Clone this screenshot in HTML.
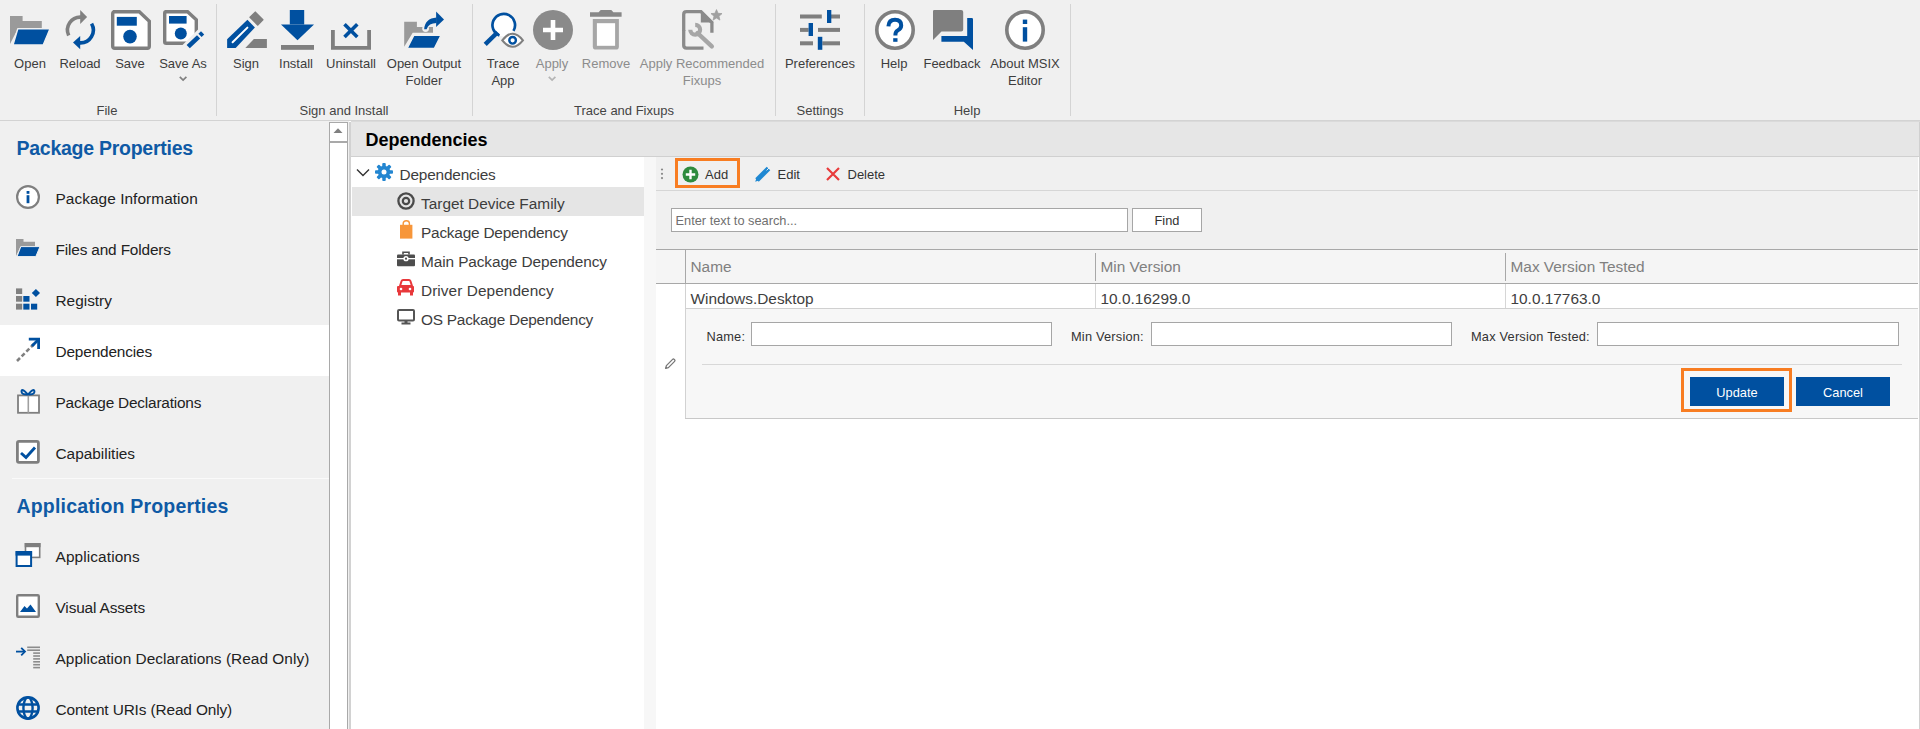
<!DOCTYPE html>
<html><head><meta charset="utf-8">
<style>
*{margin:0;padding:0;box-sizing:border-box}
html,body{width:1920px;height:729px;overflow:hidden;background:#fff;font-family:"Liberation Sans",sans-serif;color:#222}
.a{position:absolute}
.t{position:absolute;white-space:nowrap}
svg{overflow:visible}
</style></head><body>
<div class="a" style="left:0px;top:0px;width:1920px;height:120px;background:#f0f0f0"></div>
<div class="a" style="left:0px;top:120px;width:1920px;height:1px;background:#d3d3d3"></div>
<div class="a" style="left:216px;top:4px;width:1px;height:112px;background:#d4d4d4"></div>
<div class="a" style="left:472px;top:4px;width:1px;height:112px;background:#d4d4d4"></div>
<div class="a" style="left:775px;top:4px;width:1px;height:112px;background:#d4d4d4"></div>
<div class="a" style="left:864px;top:4px;width:1px;height:112px;background:#d4d4d4"></div>
<div class="a" style="left:1070px;top:4px;width:1px;height:112px;background:#d4d4d4"></div>
<div class="t" style="left:-270px;width:600px;text-align:center;top:57.23px;font-size:13px;line-height:14.52px;color:#3d3d3d;font-weight:normal;">Open</div>
<div class="t" style="left:-220px;width:600px;text-align:center;top:57.23px;font-size:13px;line-height:14.52px;color:#3d3d3d;font-weight:normal;">Reload</div>
<div class="t" style="left:-170px;width:600px;text-align:center;top:57.23px;font-size:13px;line-height:14.52px;color:#3d3d3d;font-weight:normal;">Save</div>
<div class="t" style="left:-117px;width:600px;text-align:center;top:57.23px;font-size:13px;line-height:14.52px;color:#3d3d3d;font-weight:normal;">Save As</div>
<div class="t" style="left:-54px;width:600px;text-align:center;top:57.23px;font-size:13px;line-height:14.52px;color:#3d3d3d;font-weight:normal;">Sign</div>
<div class="t" style="left:-4px;width:600px;text-align:center;top:57.23px;font-size:13px;line-height:14.52px;color:#3d3d3d;font-weight:normal;">Install</div>
<div class="t" style="left:51px;width:600px;text-align:center;top:57.23px;font-size:13px;line-height:14.52px;color:#3d3d3d;font-weight:normal;">Uninstall</div>
<div class="t" style="left:124px;width:600px;text-align:center;top:57.23px;font-size:13px;line-height:14.52px;color:#3d3d3d;font-weight:normal;">Open Output</div>
<div class="t" style="left:124px;width:600px;text-align:center;top:74.23px;font-size:13px;line-height:14.52px;color:#3d3d3d;font-weight:normal;">Folder</div>
<div class="t" style="left:203px;width:600px;text-align:center;top:57.23px;font-size:13px;line-height:14.52px;color:#3d3d3d;font-weight:normal;">Trace</div>
<div class="t" style="left:203px;width:600px;text-align:center;top:74.23px;font-size:13px;line-height:14.52px;color:#3d3d3d;font-weight:normal;">App</div>
<div class="t" style="left:252px;width:600px;text-align:center;top:57.23px;font-size:13px;line-height:14.52px;color:#8c8c8c;font-weight:normal;">Apply</div>
<div class="t" style="left:306px;width:600px;text-align:center;top:57.23px;font-size:13px;line-height:14.52px;color:#8c8c8c;font-weight:normal;">Remove</div>
<div class="t" style="left:402px;width:600px;text-align:center;top:57.23px;font-size:13px;line-height:14.52px;color:#8c8c8c;font-weight:normal;">Apply Recommended</div>
<div class="t" style="left:402px;width:600px;text-align:center;top:74.23px;font-size:13px;line-height:14.52px;color:#8c8c8c;font-weight:normal;">Fixups</div>
<div class="t" style="left:520px;width:600px;text-align:center;top:57.23px;font-size:13px;line-height:14.52px;color:#3d3d3d;font-weight:normal;">Preferences</div>
<div class="t" style="left:594px;width:600px;text-align:center;top:57.23px;font-size:13px;line-height:14.52px;color:#3d3d3d;font-weight:normal;">Help</div>
<div class="t" style="left:652px;width:600px;text-align:center;top:57.23px;font-size:13px;line-height:14.52px;color:#3d3d3d;font-weight:normal;">Feedback</div>
<div class="t" style="left:725px;width:600px;text-align:center;top:57.23px;font-size:13px;line-height:14.52px;color:#3d3d3d;font-weight:normal;">About MSIX</div>
<div class="t" style="left:725px;width:600px;text-align:center;top:74.23px;font-size:13px;line-height:14.52px;color:#3d3d3d;font-weight:normal;">Editor</div>
<div class="t" style="left:-193px;width:600px;text-align:center;top:103.73px;font-size:13px;line-height:14.52px;color:#444;font-weight:normal;">File</div>
<div class="t" style="left:44px;width:600px;text-align:center;top:103.73px;font-size:13px;line-height:14.52px;color:#444;font-weight:normal;">Sign and Install</div>
<div class="t" style="left:324px;width:600px;text-align:center;top:103.73px;font-size:13px;line-height:14.52px;color:#444;font-weight:normal;">Trace and Fixups</div>
<div class="t" style="left:520px;width:600px;text-align:center;top:103.73px;font-size:13px;line-height:14.52px;color:#444;font-weight:normal;">Settings</div>
<div class="t" style="left:667px;width:600px;text-align:center;top:103.73px;font-size:13px;line-height:14.52px;color:#444;font-weight:normal;">Help</div>
<svg class="a" style="left:179px;top:76px" width="9" height="6" viewBox="0 0 9 6"><path d="M0.8,0.8 L4.1,4.1 L7.4,0.8" fill="none" stroke="#808080" stroke-width="1.7"/></svg>
<svg class="a" style="left:548px;top:76px" width="9" height="6" viewBox="0 0 9 6"><path d="M0.8,0.8 L4.1,4.1 L7.4,0.8" fill="none" stroke="#b4b4b4" stroke-width="1.7"/></svg>
<svg class="a" style="left:10px;top:10px" width="40" height="40" viewBox="0 0 40 40"><path d="M0,6 H12.6 V11 H31.8 V18.8 H7.8 L0,34 Z" fill="#9a9a9a"/><path d="M7.8,18.8 H40 L33.2,35 H3 Z" fill="#0050a0" stroke="#f0f0f0" stroke-width="1.4" stroke-linejoin="round"/></svg>
<svg class="a" style="left:60px;top:10px" width="40" height="40" viewBox="0 0 40 40"><path d="M8.7,25.45 A12.9,12.9 0 0 1 21,7.1" fill="none" stroke="#808080" stroke-width="3.6"/><path d="M20.2,0.1 L27.1,7 L20.2,13.9 Z" fill="#808080"/><path d="M31.57,13.55 A12.9,12.9 0 0 1 19.8,32.9" fill="none" stroke="#0050a0" stroke-width="3.6"/><path d="M20.2,25.9 L13,32.5 L20.2,39.2 Z" fill="#0050a0"/></svg>
<svg class="a" style="left:111px;top:10px" width="40" height="40" viewBox="0 0 40 40"><path d="M2,1.7 H28.3 L38.3,11.2 V36.3 Q38.3,38.3 36.3,38.3 H3.7 Q1.7,38.3 1.7,36.3 V3.7 Q1.7,1.7 3.7,1.7 Z" fill="#fff" stroke="#7f7f7f" stroke-width="3.4"/><rect x="5.8" y="6.9" width="20" height="8.8" fill="#0050a0"/><circle cx="19" cy="26.6" r="6.8" fill="#0050a0"/></svg>
<svg class="a" style="left:163px;top:10px" width="42" height="42" viewBox="0 0 42 42"><path d="M1.7,1.7 H24.6 L33.3,9.8 V29 L26,33.2 H3.2 Q1.7,33.2 1.7,31.7 V3.2 Q1.7,1.7 3.2,1.7 Z" fill="#fff" stroke="#7f7f7f" stroke-width="3.4"/><rect x="6" y="6" width="17.6" height="7.6" fill="#0050a0"/><circle cx="17.8" cy="23.6" r="6" fill="#0050a0"/><path d="M19,42 L41,20" stroke="#f0f0f0" stroke-width="9"/><path d="M25.2,36.6 L35.6,26.8" stroke="#0050a0" stroke-width="4.6"/><path d="M37,25.3 L39.6,22.8" stroke="#0050a0" stroke-width="4.6"/></svg>
<svg class="a" style="left:226px;top:10px" width="42" height="40" viewBox="0 0 42 40"><path d="M1.1,37.9 V29.3 L21.4,9.7 L28.9,17.6 L9.7,37.9 Z" fill="#0050a0"/><path d="M6.6,32.2 L21.4,17.6" stroke="#fff" stroke-width="2" stroke-linecap="round"/><path d="M24.1,7.3 L29.3,2.2 L36.8,9.7 L31.7,14.9 Z" fill="#7f7f7f" stroke="#7f7f7f" stroke-width="1.6" stroke-linejoin="round"/><path d="M19.3,37.9 L27.9,29 H40.9 V37.9 Z" fill="#7f7f7f"/></svg>
<svg class="a" style="left:281px;top:10px" width="34" height="40" viewBox="0 0 34 40"><rect x="8.8" y="0" width="14.4" height="14.5" fill="#0050a0"/><path d="M0,14.5 H33 L16.5,30.3 Z" fill="#0050a0"/><rect x="0" y="35" width="33" height="4.8" fill="#7f7f7f"/></svg>
<svg class="a" style="left:331px;top:22px" width="40" height="28" viewBox="0 0 40 28"><path d="M1.9,8 V25.8 H38.1 V8" fill="none" stroke="#7f7f7f" stroke-width="3.8"/><path d="M13.5,2.3 L26.3,15 M26.3,2.3 L13.5,15" stroke="#0050a0" stroke-width="3.6"/></svg>
<svg class="a" style="left:403px;top:10px" width="42" height="40" viewBox="0 0 42 40"><path d="M1.2,11.8 H13.9 V17 H30 V22.8 H9.7 L1.2,36.8 Z" fill="#9a9a9a"/><path d="M10.8,25.2 H38.2 L31.4,38.6 H3.9 Z" fill="#0050a0" stroke="#f0f0f0" stroke-width="1.6" stroke-linejoin="round"/><circle cx="22.6" cy="18.6" r="3.4" fill="#f0f0f0"/><path d="M21.2,19.2 Q21.8,8.6 33.6,7.6 V13 Q25.6,13 23.6,19.2 Z" fill="#0050a0"/><path d="M33.1,1.5 L41,9.4 L33.1,17 Z" fill="#0050a0"/></svg>
<svg class="a" style="left:483px;top:10px" width="42" height="40" viewBox="0 0 42 40"><circle cx="20.7" cy="15.2" r="11.3" fill="#fff"/><path d="M16.5,25.6 A11.3,11.3 0 1 1 30.49,20.85" fill="none" stroke="#0050a0" stroke-width="2.7"/><path d="M2.2,34.4 L14.6,22.2" stroke="#0050a0" stroke-width="4.4"/><path d="M19.3,30.3 Q29.6,17.3 39.9,30.3 Q29.6,43.3 19.3,30.3 Z" fill="#fff" stroke="#7f7f7f" stroke-width="2.1"/><circle cx="29.6" cy="30.3" r="3.3" fill="none" stroke="#0050a0" stroke-width="2.4"/></svg>
<svg class="a" style="left:533px;top:10px" width="40" height="40" viewBox="0 0 40 40"><circle cx="20" cy="20" r="20" fill="#8a8a8a"/><path d="M20,10 V30 M10,20 H30" stroke="#fff" stroke-width="4.6"/></svg>
<svg class="a" style="left:590px;top:10px" width="32" height="40" viewBox="0 0 32 40"><path d="M0,2.2 H8.6 L10.7,0.1 H21.3 L23.4,2.2 H31.6 V6.7 H0 Z" fill="#888"/><path d="M2.8,9.1 H28.9 V36.4 Q28.9,39.6 25.7,39.6 H6 Q2.8,39.6 2.8,36.4 Z" fill="#a6a6a6"/><rect x="6.9" y="13.2" width="18.2" height="22.6" fill="#fff"/></svg>
<svg class="a" style="left:682px;top:10px" width="42" height="40" viewBox="0 0 42 40"><path d="M1.7,21 V4.5 Q1.7,1.7 4.5,1.7 H19 L29.9,12.5 V22.7" fill="none" stroke="#8a8a8a" stroke-width="3.3"/><path d="M1.7,20 V35.3 Q1.7,38.1 4.5,38.1 H21.5" fill="none" stroke="#8a8a8a" stroke-width="3.3"/><path d="M18.8,0.5 L31.5,12.5 H18.8 Z" fill="#8a8a8a"/><path d="M15.5,23 L29.8,36.4" stroke="#a6a6a6" stroke-width="4.4" stroke-linecap="round"/><path d="M13.2,14.8 A4.9,4.9 0 1 1 8.3,19.7" fill="none" stroke="#a6a6a6" stroke-width="4.2"/><path d="M34.50,-0.40 L36.03,3.30 L40.02,3.61 L36.97,6.20 L37.91,10.09 L34.50,8.00 L31.09,10.09 L32.03,6.20 L28.98,3.61 L32.97,3.30 Z" fill="#a0a0a0" stroke="#a0a0a0" stroke-width="0.8" stroke-linejoin="round"/></svg>
<svg class="a" style="left:800px;top:10px" width="40" height="40" viewBox="0 0 40 40"><rect x="0" y="4.5" width="21.8" height="4" fill="#7f7f7f"/><rect x="31" y="4.5" width="9" height="4" fill="#7f7f7f"/><rect x="27" y="0" width="4.3" height="13" fill="#0050a0"/><rect x="0" y="17.9" width="8.6" height="4" fill="#7f7f7f"/><rect x="18" y="17.9" width="22" height="4" fill="#7f7f7f"/><rect x="8.6" y="13" width="4.4" height="13" fill="#0050a0"/><rect x="0" y="31.3" width="13" height="4" fill="#7f7f7f"/><rect x="22.3" y="31.3" width="17.7" height="4" fill="#7f7f7f"/><rect x="17.8" y="26.8" width="4.5" height="13" fill="#0050a0"/></svg>
<svg class="a" style="left:875px;top:10px" width="40" height="40" viewBox="0 0 40 40"><circle cx="20" cy="20" r="18.2" fill="#fff" stroke="#7f7f7f" stroke-width="3.6"/><path d="M13.4,16.3 Q13.8,9.8 20,9.8 Q26.2,9.8 26.2,15.4 Q26.2,18.4 22.8,20.4 Q20.4,21.8 20.4,24.8 V25.6" fill="none" stroke="#0050a0" stroke-width="4"/><rect x="18.2" y="28.2" width="4.3" height="3.6" fill="#0050a0"/></svg>
<svg class="a" style="left:933px;top:10px" width="40" height="40" viewBox="0 0 40 40"><path d="M1.2,0 H28.2 Q30.2,0 30.2,2 V19.5 Q30.2,21.5 28.2,21.5 H8.5 L0,30 V1.2 Q0,0 1.2,0 Z" fill="#7f7f7f"/><path d="M34.2,8.1 H38.8 Q40,8.1 40,9.3 V40 L30.8,31.7 H8.4 V25.9 H34.2 Z" fill="#0050a0"/></svg>
<svg class="a" style="left:1005px;top:10px" width="40" height="40" viewBox="0 0 40 40"><circle cx="20" cy="20" r="18.2" fill="#fff" stroke="#7f7f7f" stroke-width="3.6"/><rect x="17.8" y="9.6" width="4.4" height="4.4" fill="#0050a0"/><rect x="17.8" y="17.2" width="4.4" height="14.4" fill="#0050a0"/></svg>
<div class="a" style="left:0px;top:121px;width:329px;height:608px;background:#f0f0f0"></div>
<div class="a" style="left:0px;top:325px;width:329px;height:51px;background:#fff"></div>
<div class="a" style="left:12px;top:478px;width:317px;height:1px;background:#fafafa"></div>
<div class="t" style="left:16.5px;top:138.35px;font-size:19.5px;line-height:21.78px;color:#0f5aa5;font-weight:bold;letter-spacing:-0.26px">Package Properties</div>
<div class="t" style="left:16.5px;top:496.35px;font-size:19.5px;line-height:21.78px;color:#0f5aa5;font-weight:bold;letter-spacing:0.18px">Application Properties</div>
<div class="t" style="left:55.5px;top:190.06px;font-size:15.4px;line-height:17.20px;color:#222;font-weight:normal;letter-spacing:0.06px">Package Information</div>
<div class="t" style="left:55.5px;top:241.06px;font-size:15.4px;line-height:17.20px;color:#222;font-weight:normal;letter-spacing:-0.16px">Files and Folders</div>
<div class="t" style="left:55.5px;top:292.06px;font-size:15.4px;line-height:17.20px;color:#222;font-weight:normal;letter-spacing:0px">Registry</div>
<div class="t" style="left:55.5px;top:343.06px;font-size:15.4px;line-height:17.20px;color:#222;font-weight:normal;letter-spacing:-0.16px">Dependencies</div>
<div class="t" style="left:55.5px;top:394.06px;font-size:15.4px;line-height:17.20px;color:#222;font-weight:normal;letter-spacing:-0.2px">Package Declarations</div>
<div class="t" style="left:55.5px;top:445.06px;font-size:15.4px;line-height:17.20px;color:#222;font-weight:normal;letter-spacing:0px">Capabilities</div>
<div class="t" style="left:55.5px;top:548.06px;font-size:15.4px;line-height:17.20px;color:#222;font-weight:normal;letter-spacing:0.11px">Applications</div>
<div class="t" style="left:55.5px;top:599.06px;font-size:15.4px;line-height:17.20px;color:#222;font-weight:normal;letter-spacing:-0.14px">Visual Assets</div>
<div class="t" style="left:55.5px;top:650.06px;font-size:15.4px;line-height:17.20px;color:#222;font-weight:normal;letter-spacing:0.04px">Application Declarations (Read Only)</div>
<div class="t" style="left:55.5px;top:701.06px;font-size:15.4px;line-height:17.20px;color:#222;font-weight:normal;letter-spacing:-0.13px">Content URIs (Read Only)</div>
<svg class="a" style="left:16px;top:185px" width="24" height="24" viewBox="0 0 24 24"><circle cx="12" cy="12" r="10.9" fill="#fff" stroke="#7f7f7f" stroke-width="2.2"/><rect x="10.6" y="6" width="2.8" height="2.8" fill="#0050a0"/><rect x="10.6" y="10.2" width="2.8" height="8" fill="#0050a0"/></svg>
<svg class="a" style="left:16px;top:239px" width="24" height="20" viewBox="0 0 24 20"><path d="M0,0 H7.5 V2.8 H19 V7.4 H4.6 L0,17 Z" fill="#9a9a9a"/><path d="M4.8,7.6 H24 L19.8,17.6 H1 Z" fill="#0050a0" stroke="#f0f0f0" stroke-width="1" stroke-linejoin="round"/></svg>
<svg class="a" style="left:16px;top:288px" width="24" height="24" viewBox="0 0 24 24"><rect x="0" y="0.4" width="6.2" height="5.6" fill="#808080"/><rect x="0" y="8" width="6.2" height="5.7" fill="#808080"/><rect x="0" y="15.7" width="6.2" height="5.9" fill="#808080"/><rect x="7.3" y="8" width="6.2" height="5.7" fill="#0050a0"/><rect x="7.3" y="15.7" width="6.2" height="5.9" fill="#0050a0"/><rect x="15" y="15.7" width="6.2" height="5.9" fill="#0050a0"/><path d="M19.9,1 L24,5 L19.9,9 L15.8,5 Z" fill="#0050a0"/></svg>
<svg class="a" style="left:16px;top:336px" width="26" height="28" viewBox="0 0 26 28"><path d="M1,25 L19,7" stroke="#808080" stroke-width="2.6" stroke-dasharray="4.2,2.4"/><path d="M12.8,3.2 H22.6 V13" fill="none" stroke="#0050a0" stroke-width="2.8"/><path d="M22,4 L16,10" stroke="#0050a0" stroke-width="2.8"/></svg>
<svg class="a" style="left:16px;top:387px" width="26" height="28" viewBox="0 0 26 28"><rect x="2" y="8.4" width="21" height="17.4" fill="#fff" stroke="#7f7f7f" stroke-width="1.8"/><path d="M12.3,8.4 V25.8" stroke="#a0a0a0" stroke-width="1.6"/><path d="M12,7.6 Q5,0 5.6,5 Q5.8,7.6 12,7.6 Q18.6,0 18.4,5 Q18.2,7.6 12,7.6" fill="none" stroke="#0050a0" stroke-width="2"/></svg>
<svg class="a" style="left:16px;top:440px" width="24" height="24" viewBox="0 0 24 24"><rect x="1.4" y="1.4" width="21" height="21" rx="1.6" fill="#fff" stroke="#7f7f7f" stroke-width="2.8"/><path d="M5,13 L10,17.5 L19,7.5" fill="none" stroke="#0050a0" stroke-width="2.9"/></svg>
<svg class="a" style="left:15px;top:543px" width="26" height="25" viewBox="0 0 26 25"><rect x="10.5" y="0.8" width="14.2" height="13.6" fill="#fff" stroke="#7f7f7f" stroke-width="1.6"/><rect x="9.7" y="0" width="15.8" height="4.2" fill="#7f7f7f"/><rect x="1.6" y="9" width="14.5" height="14" fill="#fff" stroke="#0050a0" stroke-width="2"/><rect x="0.6" y="8.2" width="16.5" height="4.4" fill="#0050a0"/></svg>
<svg class="a" style="left:16px;top:594px" width="24" height="24" viewBox="0 0 24 24"><rect x="1.2" y="1.2" width="21.6" height="21.6" rx="1" fill="#fff" stroke="#7f7f7f" stroke-width="2.4"/><path d="M4,18 L8.5,12 L11,14.5 L14.5,10.5 L20,18 Z" fill="#0050a0"/></svg>
<svg class="a" style="left:16px;top:646px" width="24" height="24" viewBox="0 0 24 24"><rect x="11.2" y="0.5" width="12.8" height="1.6" fill="#8c8c8c"/><rect x="11.2" y="3.4" width="12.8" height="1.6" fill="#8c8c8c"/><rect x="17.2" y="6.3" width="6.8" height="1.6" fill="#8c8c8c"/><rect x="17.2" y="9.2" width="6.8" height="1.6" fill="#8c8c8c"/><rect x="17.2" y="12.1" width="6.8" height="1.6" fill="#8c8c8c"/><rect x="17.2" y="15.0" width="6.8" height="1.6" fill="#8c8c8c"/><rect x="17.2" y="17.9" width="6.8" height="1.6" fill="#8c8c8c"/><rect x="17.2" y="20.8" width="6.8" height="1.6" fill="#8c8c8c"/><path d="M0,5.6 H9" stroke="#0050a0" stroke-width="1.8"/><path d="M5.2,1.8 L9,5.6 L5.2,9.4" fill="none" stroke="#0050a0" stroke-width="1.8"/></svg>
<svg class="a" style="left:16px;top:696px" width="24" height="24" viewBox="0 0 24 24"><circle cx="12" cy="12" r="10.6" fill="none" stroke="#0050a0" stroke-width="2.6"/><ellipse cx="12" cy="12" rx="4.6" ry="10.6" fill="none" stroke="#0050a0" stroke-width="2.4"/><path d="M1.5,8.5 H22.5 M1.5,15.5 H22.5" stroke="#0050a0" stroke-width="2.4"/></svg>
<div class="a" style="left:329px;top:121px;width:20px;height:608px;background:#f0f0f0"></div>
<div class="a" style="left:329px;top:122px;width:19px;height:607px;background:#fff;border:1px solid #a9a9a9;border-bottom:none"></div>
<div class="a" style="left:330px;top:141px;width:17px;height:2px;background:#a9a9a9"></div>
<svg class="a" style="left:333px;top:127px" width="10" height="7" viewBox="0 0 10 7"><path d="M0.5,6 L5,1.2 L9.5,6 Z" fill="#808080"/></svg>
<div class="a" style="left:349px;top:122px;width:2px;height:607px;background:#d2d2d2"></div>
<div class="a" style="left:351px;top:122px;width:1569px;height:607px;background:#fff"></div>
<div class="a" style="left:1919px;top:122px;width:1px;height:607px;background:#d0d0d0"></div>
<div class="a" style="left:351px;top:121px;width:1569px;height:1px;background:#dadada"></div>
<div class="a" style="left:351px;top:122px;width:1568px;height:34px;background:#e6e6e6"></div>
<div class="a" style="left:351px;top:156px;width:1568px;height:1px;background:#d0d0d0"></div>
<div class="t" style="left:365.5px;top:129.71px;font-size:18px;line-height:20.11px;color:#000;font-weight:bold;">Dependencies</div>
<div class="a" style="left:352px;top:187px;width:292px;height:29px;background:#e5e5e5"></div>
<svg class="a" style="left:356px;top:168px" width="14" height="10" viewBox="0 0 14 10"><path d="M1,1.5 L7,7.5 L13,1.5" fill="none" stroke="#333" stroke-width="1.4"/></svg>
<svg class="a" style="left:375px;top:163px" width="18" height="18" viewBox="0 0 18 18"><g transform="translate(9,9)" fill="#2386d1"><rect x="-1.75" y="-9" width="3.5" height="5" rx="0.9" transform="rotate(0)"/><rect x="-1.75" y="-9" width="3.5" height="5" rx="0.9" transform="rotate(45)"/><rect x="-1.75" y="-9" width="3.5" height="5" rx="0.9" transform="rotate(90)"/><rect x="-1.75" y="-9" width="3.5" height="5" rx="0.9" transform="rotate(135)"/><rect x="-1.75" y="-9" width="3.5" height="5" rx="0.9" transform="rotate(180)"/><rect x="-1.75" y="-9" width="3.5" height="5" rx="0.9" transform="rotate(225)"/><rect x="-1.75" y="-9" width="3.5" height="5" rx="0.9" transform="rotate(270)"/><rect x="-1.75" y="-9" width="3.5" height="5" rx="0.9" transform="rotate(315)"/><circle r="6.2"/></g><circle cx="9" cy="9" r="2.5" fill="#fff"/></svg>
<div class="t" style="left:399.5px;top:166.36px;font-size:15.4px;line-height:17.20px;color:#3d3d3d;font-weight:normal;letter-spacing:-0.19px">Dependencies</div>
<div class="t" style="left:421px;top:194.56px;font-size:15.4px;line-height:17.20px;color:#3d3d3d;font-weight:normal;letter-spacing:0px">Target Device Family</div>
<div class="t" style="left:421px;top:223.56px;font-size:15.4px;line-height:17.20px;color:#3d3d3d;font-weight:normal;letter-spacing:-0.22px">Package Dependency</div>
<div class="t" style="left:421px;top:252.56px;font-size:15.4px;line-height:17.20px;color:#3d3d3d;font-weight:normal;letter-spacing:-0.1px">Main Package Dependency</div>
<div class="t" style="left:421px;top:281.56px;font-size:15.4px;line-height:17.20px;color:#3d3d3d;font-weight:normal;letter-spacing:0.06px">Driver Dependency</div>
<div class="t" style="left:421px;top:310.56px;font-size:15.4px;line-height:17.20px;color:#3d3d3d;font-weight:normal;letter-spacing:-0.24px">OS Package Dependency</div>
<svg class="a" style="left:396px;top:191px" width="20" height="20" viewBox="0 0 20 20"><circle cx="10" cy="10" r="7.6" fill="none" stroke="#4a4a4a" stroke-width="2.3"/><circle cx="10" cy="10" r="3.2" fill="none" stroke="#4a4a4a" stroke-width="2.2"/></svg>
<svg class="a" style="left:399px;top:220px" width="15" height="19" viewBox="0 0 15 19"><path d="M4.2,5 V3.5 Q4.2,0.8 7.3,0.8 Q10.4,0.8 10.4,3.5 V5" fill="none" stroke="#f7963a" stroke-width="1.4"/><rect x="1" y="4.8" width="12.4" height="13.8" fill="#f7963a"/></svg>
<svg class="a" style="left:397px;top:251px" width="18" height="16" viewBox="0 0 18 16"><path d="M6,3.4 V1.2 H12 V3.4" fill="none" stroke="#4d4d4d" stroke-width="1.6"/><rect x="0" y="3.4" width="18" height="11.8" rx="1" fill="#4d4d4d"/><rect x="0" y="7" width="18" height="1.3" fill="#fff"/><circle cx="9" cy="7.7" r="2.6" fill="#fff"/><circle cx="9" cy="7.7" r="1.1" fill="#4d4d4d"/></svg>
<svg class="a" style="left:397px;top:279px" width="18" height="17" viewBox="0 0 18 17"><path d="M3,7 L4.6,2 Q5,1 6,1 H12 Q13,1 13.4,2 L15,7 Z" fill="none" stroke="#e8383b" stroke-width="2"/><rect x="0" y="7" width="17" height="6.5" rx="1" fill="#e8383b"/><rect x="1" y="12" width="3" height="4.5" fill="#e8383b"/><rect x="13" y="12" width="3" height="4.5" fill="#e8383b"/><circle cx="4" cy="10" r="1.3" fill="#fff"/><circle cx="13" cy="10" r="1.3" fill="#fff"/></svg>
<svg class="a" style="left:397px;top:309px" width="19" height="17" viewBox="0 0 19 17"><rect x="1" y="1" width="16" height="10.5" rx="1" fill="#fff" stroke="#555" stroke-width="2"/><rect x="7.5" y="12" width="3" height="2" fill="#555"/><rect x="4.5" y="13.5" width="9" height="2" fill="#555"/></svg>
<div class="a" style="left:644px;top:157px;width:12px;height:572px;background:#f7f7f7"></div>
<div class="a" style="left:656px;top:157px;width:1262px;height:33px;background:#f0f0f0"></div>
<div class="a" style="left:656px;top:190px;width:1262px;height:1px;background:#d6d6d6"></div>
<svg class="a" style="left:660px;top:168px" width="4" height="12" viewBox="0 0 4 12"><circle cx="2" cy="1.5" r="1.1" fill="#888"/><circle cx="2" cy="5.8" r="1.1" fill="#888"/><circle cx="2" cy="10.1" r="1.1" fill="#888"/></svg>
<div class="a" style="left:675px;top:158px;width:65px;height:30px;border:3px solid #f87d22"></div>
<svg class="a" style="left:682px;top:166px" width="17" height="17" viewBox="0 0 17 17"><circle cx="8.5" cy="8.5" r="8" fill="#2e8b3e"/><path d="M8.5,3.8 V13.2 M3.8,8.5 H13.2" stroke="#fff" stroke-width="2.4"/></svg>
<div class="t" style="left:705px;top:167.94px;font-size:13px;line-height:14.52px;color:#333;font-weight:normal;">Add</div>
<svg class="a" style="left:754px;top:165px" width="18" height="18" viewBox="0 0 18 18"><path d="M3,15 L14.5,3.5" stroke="#1f88d2" stroke-width="5"/><path d="M1.2,16.8 L2.4,13.2 L4.8,15.6 Z" fill="#1f88d2"/><path d="M12.6,5.4 L15.6,2.4" stroke="#f0f0f0" stroke-width="1"/></svg>
<div class="t" style="left:777.5px;top:167.94px;font-size:13px;line-height:14.52px;color:#333;font-weight:normal;">Edit</div>
<svg class="a" style="left:825px;top:166px" width="16" height="16" viewBox="0 0 16 16"><path d="M2,2 L14,14 M14,2 L2,14" stroke="#e83b3b" stroke-width="2.2"/></svg>
<div class="t" style="left:847.5px;top:167.94px;font-size:13px;line-height:14.52px;color:#333;font-weight:normal;">Delete</div>
<div class="a" style="left:656px;top:191px;width:1262px;height:58px;background:#f0f0f0"></div>
<div class="a" style="left:671px;top:208px;width:457px;height:24px;background:#fff;border:1px solid #a6a6a6"></div>
<div class="t" style="left:675.5px;top:213.82px;font-size:12.8px;line-height:14.30px;color:#707070;font-weight:normal;">Enter text to search...</div>
<div class="a" style="left:1132px;top:208px;width:70px;height:24px;background:#fff;border:1px solid #a6a6a6"></div>
<div class="t" style="left:867px;width:600px;text-align:center;top:213.82px;font-size:12.8px;line-height:14.30px;color:#333;font-weight:normal;">Find</div>
<div class="a" style="left:656px;top:249px;width:1262px;height:1px;background:#a8a8a8"></div>
<div class="a" style="left:656px;top:250px;width:1262px;height:33px;background:#f5f5f5"></div>
<div class="a" style="left:656px;top:283px;width:1262px;height:1px;background:#a8a8a8"></div>
<div class="a" style="left:685px;top:250px;width:1px;height:33px;background:#a8a8a8"></div>
<div class="a" style="left:685px;top:284px;width:1px;height:134px;background:#d2d2d2"></div>
<div class="a" style="left:1095px;top:253px;width:1px;height:28px;background:#a8a8a8"></div>
<div class="a" style="left:1505px;top:253px;width:1px;height:28px;background:#a8a8a8"></div>
<div class="t" style="left:690.5px;top:258.06px;font-size:15.4px;line-height:17.20px;color:#808080;font-weight:normal;">Name</div>
<div class="t" style="left:1100.5px;top:258.06px;font-size:15.4px;line-height:17.20px;color:#808080;font-weight:normal;">Min Version</div>
<div class="t" style="left:1510.5px;top:258.06px;font-size:15.4px;line-height:17.20px;color:#808080;font-weight:normal;">Max Version Tested</div>
<div class="a" style="left:1095px;top:284px;width:1px;height:24px;background:#d6d6d6"></div>
<div class="a" style="left:1505px;top:284px;width:1px;height:24px;background:#d6d6d6"></div>
<div class="a" style="left:686px;top:308px;width:1232px;height:1px;background:#d0d0d0"></div>
<div class="t" style="left:690.5px;top:289.66px;font-size:15.4px;line-height:17.20px;color:#404040;font-weight:normal;">Windows.Desktop</div>
<div class="t" style="left:1100.5px;top:289.66px;font-size:15.4px;line-height:17.20px;color:#404040;font-weight:normal;">10.0.16299.0</div>
<div class="t" style="left:1510.5px;top:289.66px;font-size:15.4px;line-height:17.20px;color:#404040;font-weight:normal;">10.0.17763.0</div>
<div class="a" style="left:686px;top:309px;width:1232px;height:109px;background:#f7f7f7"></div>
<div class="a" style="left:685px;top:418px;width:1233px;height:1px;background:#c8c8c8"></div>
<svg class="a" style="left:665px;top:358px" width="11" height="11" viewBox="0 0 11 11"><path d="M0.6,10.4 L1.4,7.6 L7.6,1.4 Q8.4,0.6 9.2,1.4 L9.6,1.8 Q10.4,2.6 9.6,3.4 L3.4,9.6 Z" fill="#fff" stroke="#777" stroke-width="1.3" stroke-linejoin="round"/><path d="M0.6,10.4 L1.8,9.2" stroke="#777" stroke-width="1.2"/></svg>
<div class="t" style="left:706.5px;top:330.22px;font-size:12.8px;line-height:14.30px;color:#333;font-weight:normal;letter-spacing:0.2px">Name:</div>
<div class="a" style="left:751px;top:322px;width:301px;height:24px;background:#fff;border:1px solid #a6a6a6"></div>
<div class="t" style="left:1071px;top:330.22px;font-size:12.8px;line-height:14.30px;color:#333;font-weight:normal;letter-spacing:0.2px">Min Version:</div>
<div class="a" style="left:1151px;top:322px;width:301px;height:24px;background:#fff;border:1px solid #a6a6a6"></div>
<div class="t" style="left:1471px;top:330.22px;font-size:12.8px;line-height:14.30px;color:#333;font-weight:normal;letter-spacing:0.2px">Max Version Tested:</div>
<div class="a" style="left:1597px;top:322px;width:302px;height:24px;background:#fff;border:1px solid #a6a6a6"></div>
<div class="a" style="left:702px;top:364px;width:1200px;height:1px;background:#d8d8d8"></div>
<div class="a" style="left:1681px;top:368px;width:111px;height:44px;border:3px solid #f87d22"></div>
<div class="a" style="left:1690px;top:377px;width:94px;height:29px;background:#0050a0"></div>
<div class="t" style="left:1437px;width:600px;text-align:center;top:385.72px;font-size:12.8px;line-height:14.30px;color:#fff;font-weight:normal;">Update</div>
<div class="a" style="left:1796px;top:377px;width:94px;height:29px;background:#0050a0"></div>
<div class="t" style="left:1543px;width:600px;text-align:center;top:385.72px;font-size:12.8px;line-height:14.30px;color:#fff;font-weight:normal;">Cancel</div>
</body></html>
